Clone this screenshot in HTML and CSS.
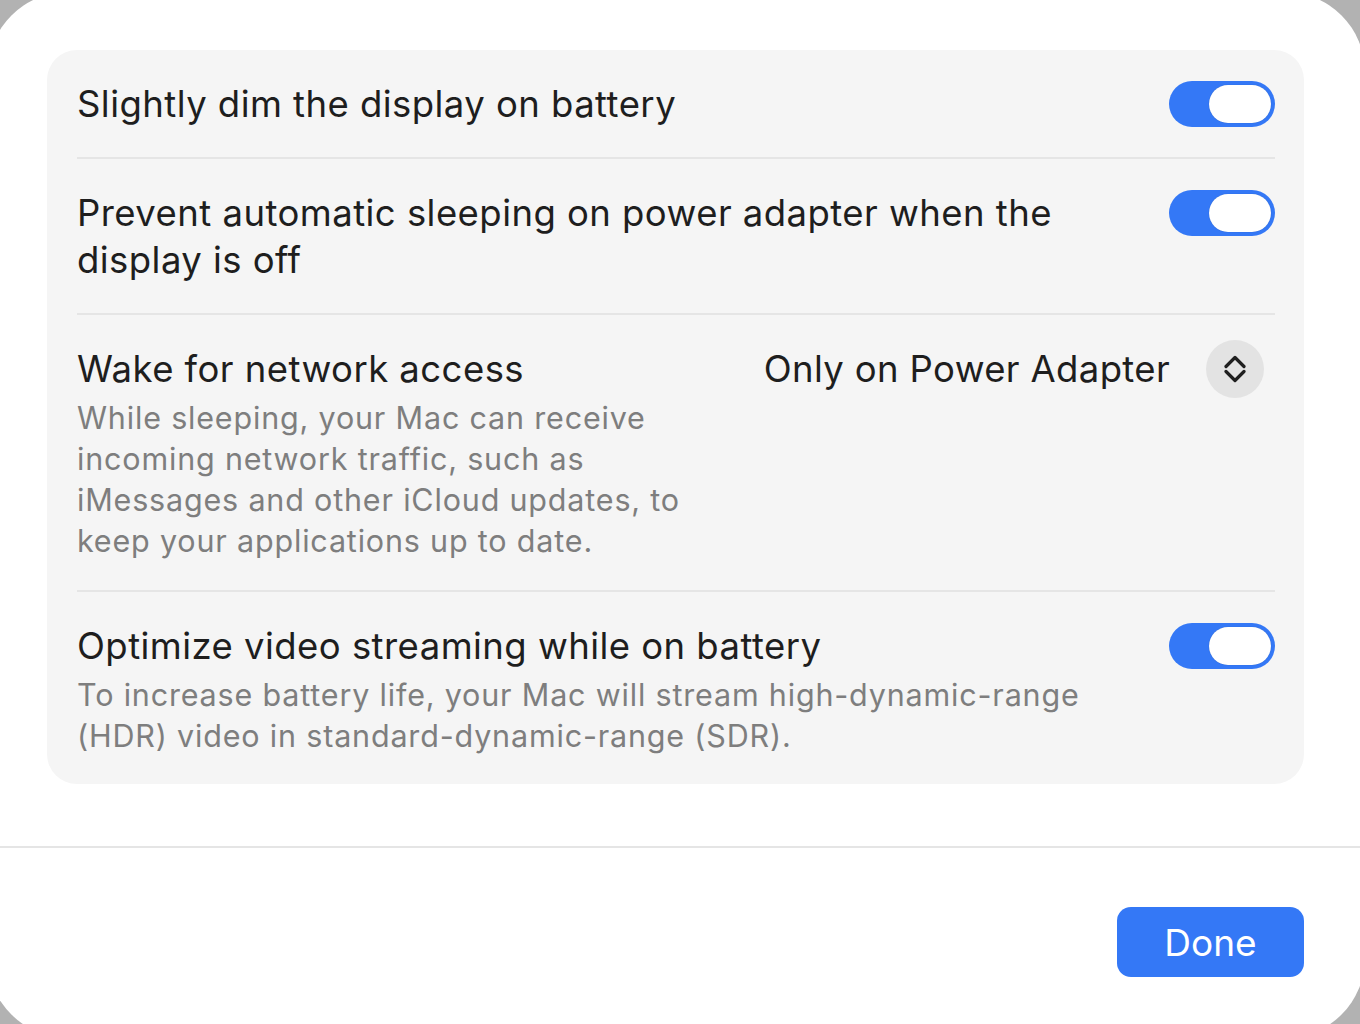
FILE: index.html
```html
<!DOCTYPE html>
<html lang="en">
<head>
<meta charset="utf-8">
<title>Battery Options</title>
<link rel="stylesheet" href="styles.css">
</head>
<body>
<div class="window">
  <div class="content">
    <div class="card">
      <div class="row">
        <div class="text">
          <div class="title">Slightly dim the display on battery</div>
        </div>
        <div class="toggle on"><span class="knob"></span></div>
      </div>
      <div class="row">
        <div class="text">
          <div class="title">Prevent automatic sleeping on power adapter when the display is off</div>
        </div>
        <div class="toggle on"><span class="knob"></span></div>
      </div>
      <div class="row">
        <div class="text narrow">
          <div class="title">Wake for network access</div>
          <div class="desc">While sleeping, your Mac can receive incoming network traffic, such as iMessages and other iCloud updates, to keep your applications up to date.</div>
        </div>
        <div class="popup">
          <span class="popup-value">Only on Power Adapter</span>
          <span class="stepper">
            <svg width="22" height="28" viewBox="0 0 22 28" fill="none" stroke="#1f1f1f" stroke-width="3.2" stroke-linecap="round" stroke-linejoin="round">
              <path d="M2 11.5 L11 2.5 L20 11.5"/>
              <path d="M2 16.5 L11 25.5 L20 16.5"/>
            </svg>
          </span>
        </div>
      </div>
      <div class="row last">
        <div class="text">
          <div class="title">Optimize video streaming while on battery</div>
          <div class="desc">To increase battery life, your Mac will stream high-dynamic-range (HDR) video in standard-dynamic-range (SDR).</div>
        </div>
        <div class="toggle on"><span class="knob"></span></div>
      </div>
    </div>
  </div>
  <div class="footer">
    <button class="done">Done</button>
  </div>
</div>
</body>
</html>
```
FILE: styles.css
```css
html, body {
  margin: 0;
  padding: 0;
  height: 100%;
  overflow: hidden;
}
body {
  background: #b2b2b2;
  font-family: Inter, "Noto Sans", "Liberation Sans", sans-serif;
  -webkit-font-smoothing: antialiased;
}
.window {
  background: #ffffff;
  margin: -8px 0 0 -12px;
  width: 1377px;
  height: 1046px;
  border-radius: 80px;
  overflow: hidden;
  display: flex;
  flex-direction: column;
}
.content {
  padding: 58px 61px 0 59px;
}
.card {
  background: #f5f5f5;
  border-radius: 30px;
  padding: 0 29px 0 30px;
}
.row {
  display: flex;
  align-items: flex-start;
  justify-content: space-between;
  gap: 40px;
  padding: 31px 0 29px;
  border-bottom: 2px solid #e5e5e5;
}
.row.last {
  border-bottom: none;
  padding-bottom: 28px;
}
.text {
  flex: 1;
  min-width: 0;
}
.text.narrow {
  flex: 0 0 640px;
}
.title {
  font-size: 36.5px;
  line-height: 47px;
  color: #1e1e1e;
  letter-spacing: 0.45px;
}
.desc {
  margin-top: 4px;
  font-size: 30.5px;
  line-height: 41px;
  color: #7e7e7e;
  letter-spacing: 0.82px;
}
.toggle {
  flex: none;
  width: 106px;
  height: 46px;
  border-radius: 23px;
  background: #3478f6;
  display: flex;
  align-items: center;
  justify-content: flex-end;
  padding: 0 4px;
  box-sizing: border-box;
}
.knob {
  width: 62px;
  height: 38px;
  border-radius: 19px;
  background: #ffffff;
  box-shadow: 0 0 1px rgba(0,0,0,0.25);
}
.popup {
  flex: none;
  display: flex;
  align-items: center;
  gap: 36px;
  margin: -6px 11px 0 0;
}
.popup-value {
  font-size: 36.5px;
  line-height: 47px;
  color: #1e1e1e;
  letter-spacing: 0.35px;
}
.stepper {
  width: 58px;
  height: 58px;
  border-radius: 50%;
  background: #e3e3e3;
  display: flex;
  align-items: center;
  justify-content: center;
}
.footer {
  margin-top: 62px;
  border-top: 2px solid #e5e5e5;
  padding: 59px 61px 0 0;
  display: flex;
  justify-content: flex-end;
}
.done {
  width: 187px;
  height: 70px;
  border: none;
  border-radius: 14px;
  background: #3478f6;
  color: #ffffff;
  font-family: Inter, "Noto Sans", "Liberation Sans", sans-serif;
  font-size: 37px;
  padding: 0;
}
```
